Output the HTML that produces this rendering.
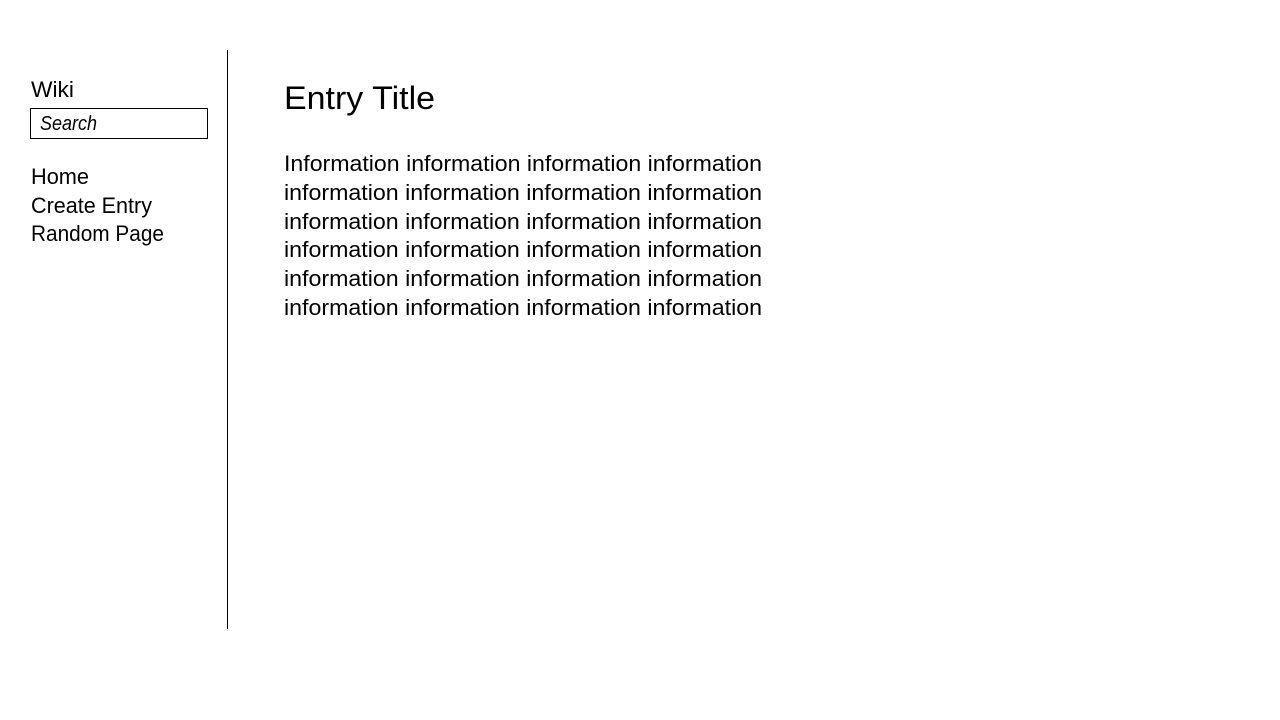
<!DOCTYPE html>
<html><head><meta charset="utf-8"><style>html,body{margin:0;padding:0;background:#fff;}svg{display:block}</style></head>
<body>
<svg width="1280" height="720" xmlns="http://www.w3.org/2000/svg" font-family="'Liberation Sans', sans-serif" fill="#000">
<line x1="227.5" y1="50" x2="227.5" y2="629" stroke="#000" stroke-width="1"/>
<rect x="30.5" y="108.5" width="177" height="30" fill="none" stroke="#000" stroke-width="1"/>
<text x="31" y="97" font-size="22" textLength="43" lengthAdjust="spacingAndGlyphs">Wiki</text>
<text x="40" y="130" font-size="20" font-style="italic" textLength="57" lengthAdjust="spacingAndGlyphs">Search</text>
<text x="31" y="184" font-size="22" textLength="58" lengthAdjust="spacingAndGlyphs">Home</text>
<text x="31" y="213" font-size="22" textLength="121" lengthAdjust="spacingAndGlyphs">Create Entry</text>
<text x="31" y="241" font-size="22" textLength="133" lengthAdjust="spacingAndGlyphs">Random Page</text>
<text x="284" y="109" font-size="32" textLength="151" lengthAdjust="spacingAndGlyphs">Entry Title</text>
<g font-size="22">
<text x="284" y="171" textLength="478" lengthAdjust="spacingAndGlyphs">Information information information information</text>
<text x="284" y="200" textLength="478" lengthAdjust="spacingAndGlyphs">information information information information</text>
<text x="284" y="229" textLength="478" lengthAdjust="spacingAndGlyphs">information information information information</text>
<text x="284" y="257" textLength="478" lengthAdjust="spacingAndGlyphs">information information information information</text>
<text x="284" y="286" textLength="478" lengthAdjust="spacingAndGlyphs">information information information information</text>
<text x="284" y="315" textLength="478" lengthAdjust="spacingAndGlyphs">information information information information</text>
</g>
</svg>
</body></html>
